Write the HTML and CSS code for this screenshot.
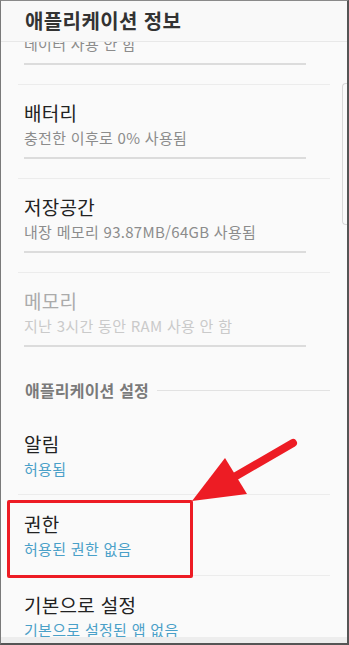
FILE: index.html
```html
<!DOCTYPE html>
<html lang="ko">
<head>
<meta charset="utf-8">
<title>애플리케이션 정보</title>
<link rel="stylesheet" href="styles.css">
</head>
<body>
<div class="page">
  <header class="appbar">애플리케이션 정보</header>
  <div class="list">
    <div class="item item-partial">
      <div class="title">데이터</div>
      <div class="sub">데이터 사용 안 함</div>
      <div class="underline"></div>
    </div>
    <div class="item">
      <div class="title">배터리</div>
      <div class="sub">충전한 이후로 0% 사용됨</div>
      <div class="underline"></div>
    </div>
    <div class="item">
      <div class="title">저장공간</div>
      <div class="sub">내장 메모리 93.87MB/64GB 사용됨</div>
      <div class="underline"></div>
    </div>
    <div class="item item-disabled item-last">
      <div class="title">메모리</div>
      <div class="sub">지난 3시간 동안 RAM 사용 안 함</div>
      <div class="underline"></div>
    </div>
    <div class="section">
      <span class="section-label">애플리케이션 설정</span>
      <span class="section-line"></span>
    </div>
    <div class="item2 item2-first">
      <div class="title">알림</div>
      <div class="sub sub-blue">허용됨</div>
    </div>
    <div class="item2">
      <div class="title">권한</div>
      <div class="sub sub-blue">허용된 권한 없음</div>
    </div>
    <div class="item2">
      <div class="title">기본으로 설정</div>
      <div class="sub sub-blue">기본으로 설정된 앱 없음</div>
    </div>
  </div>
  <div class="bottom-band"></div>

  <div class="scrollbar"></div>
  <div class="highlight-box"></div>
  <svg class="arrow" width="349" height="645" viewBox="0 0 349 645" aria-hidden="true">
    <line x1="293" y1="443" x2="236" y2="476" stroke="#ed1c24" stroke-width="8" stroke-linecap="round"/>
    <polygon points="192,501 225,458 247,494" fill="#ed1c24"/>
  </svg>
</div>
</body>
</html>
```
FILE: styles.css
```css
html, body {
  margin: 0;
  padding: 0;
  background: #fafafa;
}

.page {
  position: relative;
  width: 349px;
  height: 645px;
  box-sizing: border-box;
  border-top: 1px solid #8a8a8a;
  border-left: 1px solid #7a7a7a;
  border-right: 2px solid #555;
  border-bottom: 2px solid #555;
  background: #fafafa;
  display: flex;
  flex-direction: column;
  overflow: hidden;
  font-family: "Noto Sans CJK KR", "Noto Sans", sans-serif;
}

.appbar {
  flex: none;
  height: 40px;
  line-height: 40px;
  padding-left: 24px;
  font-size: 20px;
  font-weight: 700;
  letter-spacing: 0.4px;
  color: #333;
  border-bottom: 1px solid #e8e8e8;
  background: #f9f9f9;
  position: relative;
  z-index: 1;
}

.list {
  flex: 1;
  overflow: hidden;
  display: flex;
  flex-direction: column;
}

.item {
  margin: 0 17px;
  padding: 16px 0 19px 6px;
  border-top: 1px solid #ececec;
}

.item-partial {
  border-top: none;
  margin-top: -51px;
}

.item-last {
  padding-bottom: 0;
}

.title {
  font-size: 19px;
  line-height: 24px;
  letter-spacing: 0.3px;
  color: #222;
}

.sub {
  margin-top: 3px;
  font-size: 15px;
  line-height: 20px;
  letter-spacing: 0.3px;
  color: #8c8c8c;
}

.sub-blue {
  color: #4aa0c8;
}

.underline {
  margin-top: 9px;
  width: 282px;
  height: 2px;
  background: #dcdcdc;
}

.item-disabled .title {
  color: #ababab;
}

.item-disabled .sub {
  color: #cacaca;
}

.section {
  display: flex;
  align-items: center;
  gap: 8px;
  margin: 33px 17px 0 24px;
  height: 20px;
}

.section-label {
  font-size: 16px;
  font-weight: 700;
  letter-spacing: 0.2px;
  color: #7a7a7a;
  line-height: 20px;
}

.section-line {
  flex: 1;
  height: 1px;
  background: #e2e2e2;
}

.item2 {
  margin: 0 17px;
  padding: 17px 0 16px 6px;
  border-top: 1px solid #ececec;
}

.item2-first {
  border-top: none;
  padding-top: 32px;
  padding-bottom: 15px;
}

.bottom-band {
  flex: none;
  height: 6px;
  background: #ededed;
}

.scrollbar {
  position: absolute;
  left: 341px;
  top: 82px;
  width: 5px;
  height: 142px;
  box-sizing: border-box;
  border: 1px solid #d8d8d8;
  border-right: none;
  border-radius: 4px 0 0 4px;
}

.highlight-box {
  position: absolute;
  left: 6px;
  top: 499px;
  width: 186px;
  height: 78px;
  box-sizing: border-box;
  border: 3px solid #ed1c24;
  border-radius: 2px;
}

.arrow {
  position: absolute;
  left: -1px;
  top: -1px;
  pointer-events: none;
}
```
